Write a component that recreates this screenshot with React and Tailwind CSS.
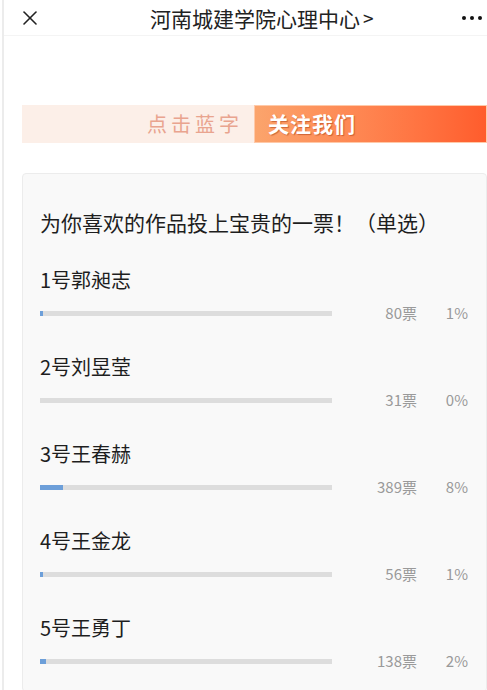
import { X } from 'lucide-react';

const candidates = [
  { name: '1号郭昶志', votes: 80, pct: 1, fill: 3 },
  { name: '2号刘昱莹', votes: 31, pct: 0, fill: 0 },
  { name: '3号王春赫', votes: 389, pct: 8, fill: 23 },
  { name: '4号王金龙', votes: 56, pct: 1, fill: 3 },
  { name: '5号王勇丁', votes: 138, pct: 2, fill: 6 },
];

const font = { fontFamily: '"Noto Sans CJK SC", "Noto Sans", sans-serif' };

const App = () => {
  return (
    <div className="min-h-screen bg-white ml-[2px] border-l-2 border-[#ececec] overflow-hidden" style={font}>
      {/* top bar */}
      <div className="flex items-center h-[36px] pt-[1px] border-b border-[#f4f4f4] text-[#222]">
        <X className="ml-[14px] w-[24px] h-[24px]" strokeWidth={1.6} />
        <div className="ml-[108px] text-[21px] leading-[28px] flex items-center">
          河南城建学院心理中心
          <span className="ml-[3px] text-[19px]">&gt;</span>
        </div>
        <div className="ml-auto mr-[5px] flex gap-[4px] items-center">
          <span className="w-[4px] h-[4px] rounded-full bg-[#111]" />
          <span className="w-[4px] h-[4px] rounded-full bg-[#111]" />
          <span className="w-[4px] h-[4px] rounded-full bg-[#111]" />
        </div>
      </div>

      {/* follow banner */}
      <div className="mt-[69px] ml-[18px] flex h-[38px]">
        <div className="w-[232px] bg-[#fcefe8] flex items-center justify-end pr-[11px]">
          <span className="text-[20px] tracking-[4px] text-[#e9a48f]">点击蓝字</span>
        </div>
        <div className="flex-1 bg-gradient-to-r from-[#fba46c] to-[#ff5c2c] flex items-center pl-[13px] border border-[#ffc9a8]">
          <span
            className="text-[21px] font-bold tracking-[1px] text-white"
            style={{ textShadow: '1px 1px 1px rgba(170,60,20,0.55)' }}
          >
            关注我们
          </span>
        </div>
      </div>

      {/* vote card */}
      <div className="mt-[30px] ml-[18px] bg-[#f9f9f9] border border-[#ececec] rounded-[4px] pl-[17px] pr-[18px] pt-[34px] pb-[20px]">
        <div className="text-[21px] leading-[28px] text-[#1e1e1e]">为你喜欢的作品投上宝贵的一票！（单选）</div>
        <div className="mt-[31px] flex flex-col gap-[31px]">
          {candidates.map((c) => (
            <div key={c.name}>
              <div className="text-[20px] leading-[26px] text-[#1e1e1e]">{c.name}</div>
              <div className="mt-[10px] flex items-center h-[20px]">
                <div className="w-[292px] h-[5px] bg-[#dddddd]">
                  <div className="h-full bg-[#6d9fd9]" style={{ width: c.fill }} />
                </div>
                <div className="w-[85px] text-right text-[15px] text-[#9a9a9a]">{c.votes}票</div>
                <div className="w-[51px] text-right text-[15px] text-[#9a9a9a]">{c.pct}%</div>
              </div>
            </div>
          ))}
        </div>
      </div>
    </div>
  );
};

export default App;
